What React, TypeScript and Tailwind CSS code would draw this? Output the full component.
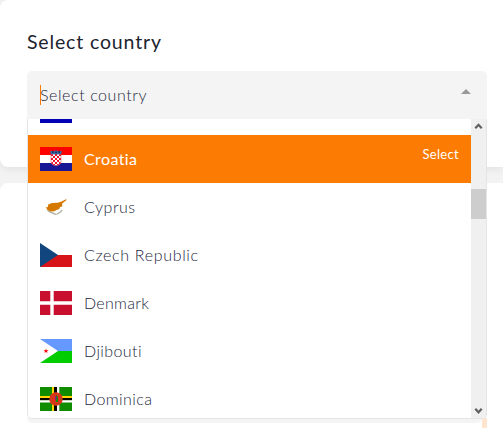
import type { ReactNode } from "react";

interface Country {
  code: string;
  name?: string;
  flag: ReactNode;
  textClass?: string;
}

const countries: Country[] = [
  {
    code: "cr",
    flag: (
      <>
        <path fill="#0000b4" d="M0 0h32v24H0z" />
        <path fill="#fff" d="M0 4h32v16H0z" />
        <path fill="#d90000" d="M0 8h32v8H0z" />
      </>
    ),
  },
  {
    code: "hr",
    name: "Croatia",
    textClass: "tracking-[0.4px]",
    flag: (
      <>
        <path fill="#171796" d="M0 0h32v24H0z" />
        <path fill="#fff" d="M0 0h32v16H0z" />
        <path fill="#f00" d="M0 0h32v8H0z" />
        <path fill="#fff" d="M11 7h10v7c0 3-2 4.500-5 4.500S11 17 11 14z" />
        <path
          fill="#f0142c"
          d="M11 7h2v2h-2zM15 7h2v2h-2zM19 7h2v2h-2zM13 9h2v2h-2zM17 9h2v2h-2zM11 11h2v2h-2zM15 11h2v2h-2zM19 11h2v2h-2zM13 13h2v2h-2zM17 13h2v2h-2zM11.500 15h1.500v2h-1.500zM15 15h2v2h-2zM19 15h1.500v2H19zM13 17h2v1h-2zM17 17h2v1h-2z"
        />
        <path fill="none" stroke="#e8344a" strokeWidth=".5" d="M11 7h10v7c0 3-2 4.500-5 4.500S11 17 11 14z" />
        <path fill="#3d6aa8" d="M10 4.500l2-.8 2 .5 2-1 2 1 2-.5 2 .8-1 2.800H11z" />
        <path fill="#1c2b55" d="M12 4h1.500v2H12zM15.300 4.500h1.500v2h-1.500zM18.500 4H20v2h-1.500z" />
      </>
    ),
  },
  {
    code: "cy",
    name: "Cyprus",
    textClass: "tracking-[0.5px]",
    flag: (
      <>
        <path fill="#fff" d="M0 0h32v24H0z" />
        <path fill="none" stroke="#b1b5a3" strokeWidth="1.500" d="M7.500 14.800l1.500 1.700 6.800 3M22 14.800l-1 1.700-4.500 3" />
        <path
          fill="#d57800"
          d="M6 12l1.800.2.400-2.600 3.800-1.500 5.800-.3 3.700-1.400L26.500 4l-.4 1.400-4 3 .2 3-2.200.7-.8 2-2.800 1-2.200 1.200-3.800.1-3.500-1.900z"
        />
      </>
    ),
  },
  {
    code: "cz",
    name: "Czech Republic",
    textClass: "tracking-[0.67px]",
    flag: (
      <>
        <path fill="#fff" d="M0 0h32v12H0z" />
        <path fill="#d7141a" d="M0 12h32v12H0z" />
        <path fill="#11457e" d="M0 0l18 12L0 24z" />
      </>
    ),
  },
  {
    code: "dk",
    name: "Denmark",
    textClass: "tracking-[0.3px]",
    flag: (
      <>
        <path fill="#c8102e" d="M0 0h32v24H0z" />
        <path fill="#fff" d="M10.300 0h3.400v24h-3.400zM0 10.300h32v3.400H0z" />
      </>
    ),
  },
  {
    code: "dj",
    name: "Djibouti",
    textClass: "tracking-[0.4px]",
    flag: (
      <>
        <path fill="#0c0" d="M0 12h32v12H0z" />
        <path fill="#69f" d="M0 0h32v12H0z" />
        <path fill="#fff" d="M0 0l18 12L0 24z" />
        <path fill="#f00" d="M6 9.500l.6 1.700h1.800l-1.400 1.200.6 1.700L6 13.100l-1.600 1 .6-1.700-1.400-1.200h1.800z" />
      </>
    ),
  },
  {
    code: "dm",
    name: "Dominica",
    textClass: "tracking-[0.42px]",
    flag: (
      <>
        <path fill="#108c00" d="M0 0h32v24H0z" />
        <path fill="#ffd600" d="M12 0h2v24h-2zM0 9h32v2H0z" />
        <path fill="#000" d="M14 0h3v24h-3zM0 11h32v2.300H0z" />
        <path fill="#fff" d="M17 0h2.300v24H17zM0 13.300h32v2.200H0z" />
        <circle cx="16" cy="12" r="6.700" fill="#e0301c" />
        <circle cx="16" cy="12" r="5" fill="none" stroke="#6a7a10" strokeWidth="1" strokeDasharray="1 2" />
        <path fill="#108c00" d="M15 10l1.500-2 1.500 2v5h-2z" />
        <path fill="#8c2080" d="M15 9h1.500v4H15z" />
      </>
    ),
  },
];

interface CountryOptionProps {
  country: Country;
  isActive: boolean;
}

function CountryOption({ country, isActive }: Readonly<CountryOptionProps>) {
  return (
    <li
      className={`flex h-12 flex-none items-center px-3 ${
        isActive ? "bg-[#fc7b03] text-white" : "text-[#1c2840]"
      }`}
    >
      <svg viewBox="0 0 32 24" className="h-6 w-8 flex-none">
        {country.flag}
      </svg>
      {country.name && (
        <span className={`ml-3 flex-1 text-base ${isActive ? "font-normal" : "font-light"} ${country.textClass}`}>
          {country.name}
        </span>
      )}
      {isActive && (
        <span className="mb-2 text-[13px] tracking-[0.3px]">Select</span>
      )}
    </li>
  );
}

function Scrollbar() {
  return (
    <div className="flex w-[15px] flex-none flex-col items-center bg-[#f0f0f0]">
      <svg viewBox="0 0 15 15" className="h-[15px] w-[15px]">
        <path fill="none" stroke="#606060" strokeWidth="2.200" d="M4.300 9.300l3.200-3.500 3.200 3.500" />
      </svg>
      <div className="mt-[55px] h-[30px] w-full bg-[#cdcdcd]" />
      <div className="flex-1" />
      <svg viewBox="0 0 15 15" className="h-[15px] w-[15px]">
        <path fill="none" stroke="#606060" strokeWidth="2.200" d="M4.300 5.800l3.200 3.500 3.200-3.500" />
      </svg>
    </div>
  );
}

function CountrySelect() {
  return (
    <div className="relative mt-[17px] w-[460px]">
      <div className="flex h-12 items-center rounded-t-[5px] bg-[#f4f4f4] pl-[13px] pr-4">
        <div className="h-5 w-px flex-none bg-[#fc7b03]" />
        <span className="-ml-px flex-1 text-base font-light tracking-[0.58px] text-[#1f2a40]">
          Select country
        </span>
        <svg viewBox="0 0 10 5" className="mb-2 h-[5px] w-[10px]">
          <path fill="#999" d="M0 5l5-5 5 5z" />
        </svg>
      </div>
      <div className="absolute left-0 top-12 z-10 w-full">
        <div className="flex h-[300px] overflow-hidden rounded-b-[5px] border border-t-0 border-[#e5e5e5] bg-white">
          <ul className="-mt-8 flex flex-1 flex-col">
            {countries.map((country) => (
              <CountryOption
                key={country.code}
                country={country}
                isActive={country.code === "hr"}
              />
            ))}
          </ul>
          <Scrollbar />
        </div>
      </div>
    </div>
  );
}

export default function App() {
  return (
    <div className="flex h-[428px] w-[503px] flex-col gap-4 overflow-hidden bg-[#f3f3f3] font-['Lato',sans-serif]">
      <section className="h-[167px] flex-none rounded-l-lg bg-white pl-[27px] pt-[30px] shadow-[0_2px_8px_rgba(0,0,0,0.08)]">
        <h2 className="text-[19.5px] font-normal leading-6 tracking-[0.85px] text-[#20242e]">
          Select country
        </h2>
        <CountrySelect />
      </section>
      <section className="flex flex-1 flex-col justify-end rounded-tl-lg bg-white pl-[27px]">
        <div className="flex h-[10px] w-[460px] bg-[#ffe5cd]">
          <div className="w-[455px] bg-white">
            <div className="h-[5px] rounded-b-[5px] bg-[#f4f4f4]" />
          </div>
        </div>
      </section>
    </div>
  );
}
